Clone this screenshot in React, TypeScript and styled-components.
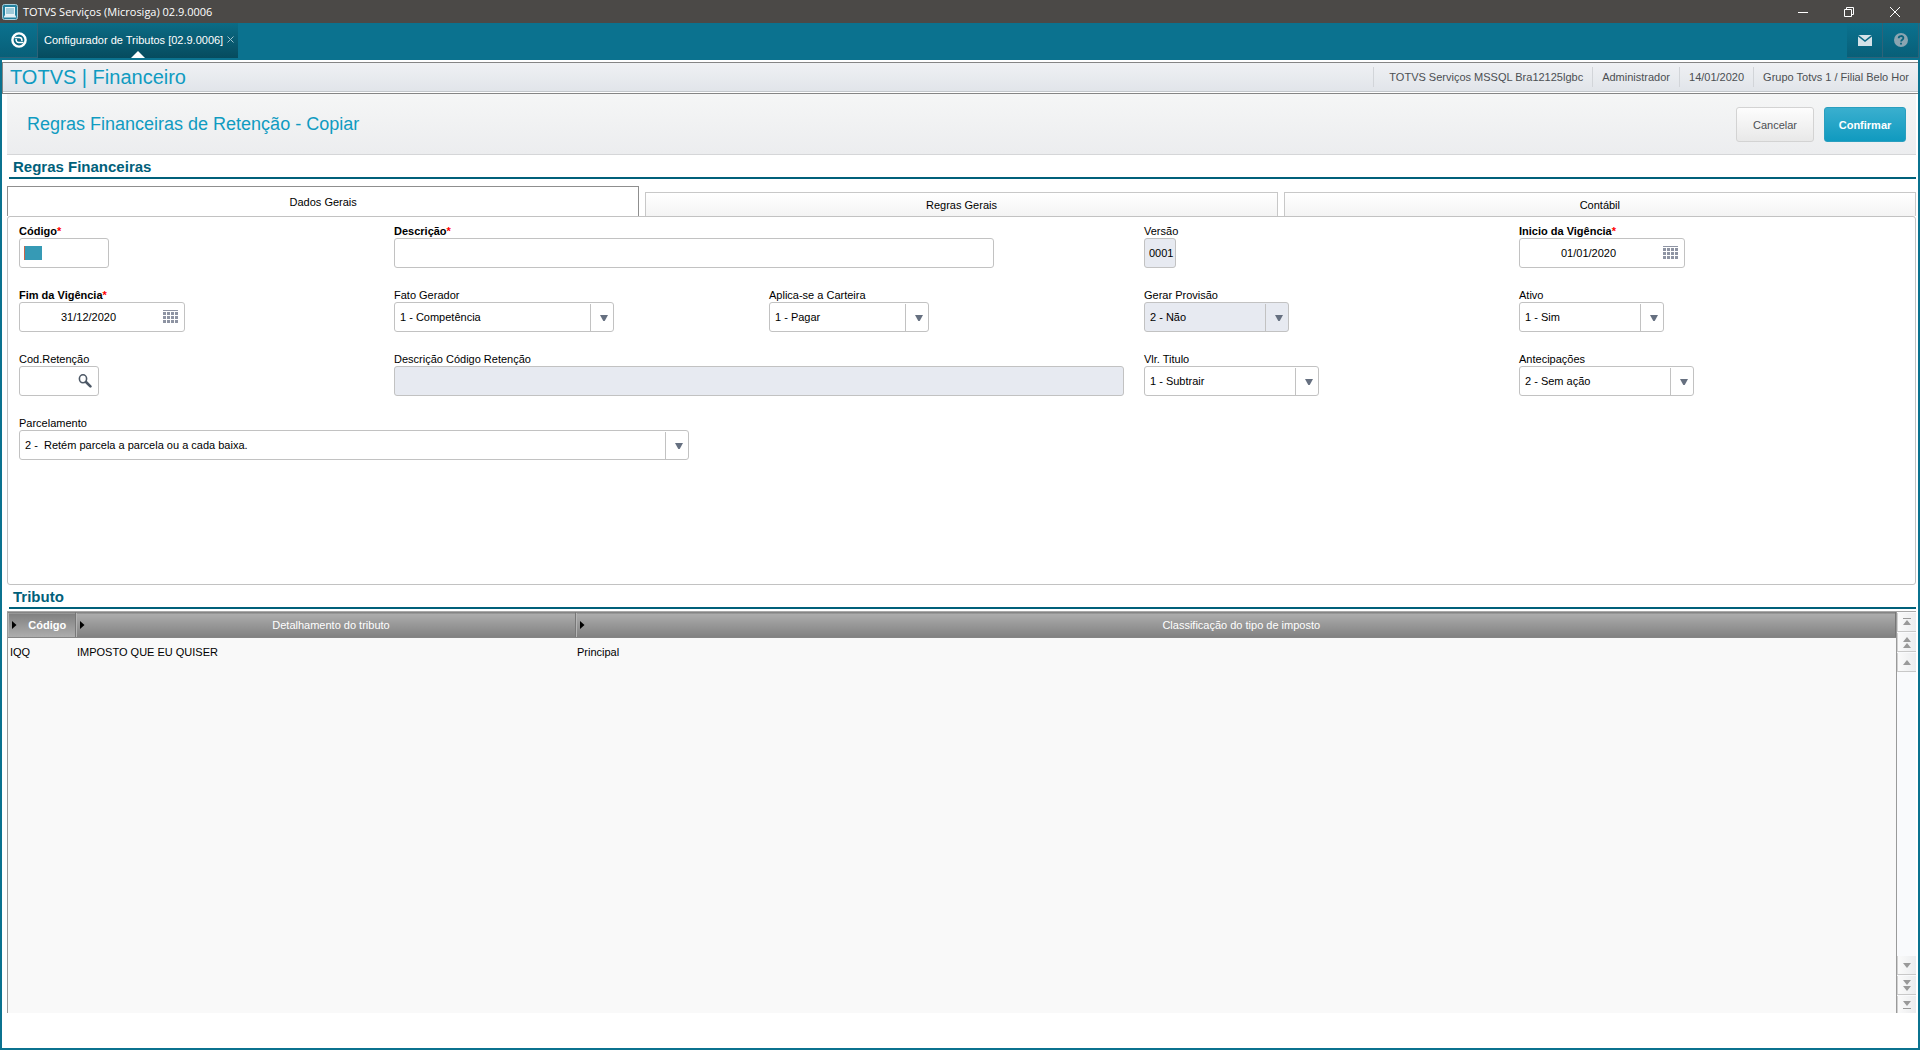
import React, { useState } from "react";
import styled, { createGlobalStyle, css } from "styled-components";

const GlobalStyle = createGlobalStyle`
  * { box-sizing: border-box; }
  body { margin: 0; background: #ffffff; }
  body, button, input, select, table {
    font-family: "Liberation Sans", Arial, sans-serif;
    font-size: 11px;
    color: #000000;
  }
  h1, h2, p { margin: 0; }
`;

const Window = styled.div`
  min-height: 100vh;
  display: flex;
  flex-direction: column;
`;

const TitleBar = styled.header`
  height: 23px;
  display: flex;
  align-items: center;
  justify-content: space-between;
  padding: 0 2px;
  background: #4b4947;
`;

const AppName = styled.div`
  display: flex;
  align-items: center;
  gap: 5px;
  font: 11px/16px "Open Sans", sans-serif;
  color: #ffffff;
`;

const WindowButtons = styled.div`
  display: flex;
`;

const WindowButton = styled.button`
  width: 46px;
  height: 21px;
  padding: 0;
  border: 0;
  display: grid;
  place-items: center;
  background: none;
`;

const TabBar = styled.nav`
  height: 37px;
  display: flex;
  align-items: flex-start;
  padding: 0 1px 0 0;
  background: #0b728f;
`;

const BarButton = styled.button<{ $width: number }>`
  width: ${(p) => p.$width}px;
  height: 35px;
  padding: 0;
  border: 0;
  border-right: 1px solid #2d6379;
  border-bottom: 1px solid #2d6379;
  display: grid;
  place-items: center;
  background: linear-gradient(#0b728f, #085f78);
`;

const ProgramTab = styled.div`
  position: relative;
  height: 35px;
  margin-right: auto;
  padding: 0 4px 2px 6px;
  display: flex;
  align-items: center;
  gap: 4px;
  background: linear-gradient(#0b6c86, #064b5e);
  color: #ffffff;
`;

const ActiveMark = styled.svg`
  position: absolute;
  bottom: 0;
  left: 50%;
  margin-left: -7px;
`;

const CloseTab = styled.button`
  padding: 0;
  border: 0;
  display: grid;
  background: none;
`;

const Frame = styled.div`
  flex: 1;
  display: flex;
  flex-direction: column;
  border: 2px solid #0b728f;
  border-top: 0;
  background: #ffffff;
`;

const ModuleBar = styled.div`
  height: 32px;
  margin-top: 2px;
  padding: 0 9px 2px 7px;
  display: flex;
  align-items: center;
  justify-content: space-between;
  border: 1px solid #858585;
  border-right: 0;
  box-shadow: inset 0 -1px #ffffff, inset 0 -2px #c3c7cb;
  background: linear-gradient(#eff1f4, #e0e4e9);
`;

const ModuleName = styled.h1`
  font-size: 20px;
  line-height: 24px;
  font-weight: normal;
  color: #0f9bc1;
`;

const SessionInfo = styled.ul`
  margin: 0;
  padding: 0;
  list-style: none;
  display: flex;
  color: #4c4f53;
`;

const SessionItem = styled.li`
  padding: 0 9px;
  line-height: 20px;
  border-left: 1px solid #d2d5d9;
  &:first-child { padding-left: 15px; }
  &:last-child { padding-right: 0; }
`;

const Content = styled.main`
  flex: 1;
  display: flex;
  flex-direction: column;
  padding: 0 2px 35px 5px;
`;

const ActionBar = styled.div`
  height: 61px;
  padding: 0 10px 0 20px;
  display: flex;
  align-items: center;
  border-bottom: 1px solid #d5d6d8;
  background: linear-gradient(#f5f6f6, #ecedef);
`;

const PageTitle = styled.h2`
  flex: 1;
  font-size: 18px;
  line-height: 24px;
  font-weight: normal;
  color: #0f9bc1;
`;

const ActionButton = styled.button<{ $primary?: boolean }>`
  width: ${(p) => (p.$primary ? 82 : 78)}px;
  height: 35px;
  margin-left: 10px;
  padding: 2px 0 0;
  border: 1px solid #d3d3d3;
  border-radius: 3px;
  background: linear-gradient(#fdfdfd, #e8e8e8);
  color: #4c4f53;
  ${(p) =>
    p.$primary &&
    css`
      border-color: #2a9fbf;
      background: linear-gradient(#3aafcf, #109abf);
      color: #ffffff;
      font-weight: bold;
    `}
`;

const SectionTitle = styled.h2`
  margin-left: 2px;
  padding: 2px 4px 0;
  border-bottom: 2px solid #00607a;
  font-size: 15px;
  line-height: 20px;
  color: #00607a;
`;

const Tabs = styled.div`
  display: flex;
  align-items: flex-end;
  gap: 6px;
  height: 37px;
  padding-top: 7px;
`;

const Tab = styled.button<{ $active: boolean }>`
  flex: 1;
  height: ${(p) => (p.$active ? 30 : 24)}px;
  padding: 0;
  border: 1px solid ${(p) => (p.$active ? "#8f8f8f" : "#c8c8c8")};
  border-bottom: 0;
  background: ${(p) => (p.$active ? "#ffffff" : "linear-gradient(#ffffff, #f4f4f4)")};
`;

const Panel = styled.form`
  min-height: 369px;
  padding: 8px 21px 0 11px;
  display: grid;
  grid-template-columns: repeat(5, 1fr);
  grid-auto-rows: 64px;
  align-content: start;
  border: 1px solid #c2c2c2;
  border-radius: 3px;
`;

const FieldCell = styled.div<{ $col: number; $row: number }>`
  grid-column: ${(p) => p.$col} / span 1;
  grid-row: ${(p) => p.$row};
  min-width: 0;
`;

const FieldLabel = styled.label<{ $required?: boolean }>`
  display: block;
  line-height: 13px;
  white-space: nowrap;
  font-weight: ${(p) => (p.$required ? "bold" : "normal")};
`;

const Asterisk = styled.span`
  color: #ff0000;
`;

const ControlBox = styled.div<{ $width: number; $locked?: boolean }>`
  position: relative;
  width: ${(p) => p.$width}px;
  height: 30px;
  display: flex;
  align-items: center;
  border: 1px solid #c2c2c2;
  border-radius: 3px;
  background: ${(p) => (p.$locked ? "#e7eaf1" : "#ffffff")};
`;

const TextInput = styled.input<{ $center?: boolean }>`
  flex: 1;
  min-width: 0;
  height: 28px;
  padding: 0 0 0 ${(p) => (p.$center ? 0 : 4)}px;
  border: 0;
  outline: 0;
  background: none;
  text-align: ${(p) => (p.$center ? "center" : "left")};
`;

const SelectInput = styled.select`
  flex: 1;
  height: 28px;
  padding: 0 24px 0 5px;
  border: 0;
  outline: 0;
  appearance: none;
  background: none;
  white-space: pre;
`;

const DropMark = styled.span`
  position: absolute;
  top: 1px;
  right: 0;
  bottom: 0;
  width: 23px;
  display: grid;
  place-items: center;
  padding-left: 3px;
  border-left: 1px solid #c2c2c2;
  pointer-events: none;
`;

const Selection = styled.span`
  position: absolute;
  top: 7px;
  left: 4px;
  width: 18px;
  height: 14px;
  border-left: 1px solid #c9654a;
  background: #369ab5;
`;

const FieldButton = styled.button`
  padding: 0 6px;
  border: 0;
  display: grid;
  background: none;
`;

const GridArea = styled.div`
  flex: 1;
  display: flex;
  margin-top: 2px;
  border-top: 1px solid #a8a8a8;
`;

const GridBody = styled.div`
  flex: 1;
  border: 1px solid #9a9a9a;
  border-top: 0;
  border-bottom: 0;
  background: #f9f9f9;
`;

const Table = styled.table`
  width: 100%;
  table-layout: fixed;
  border-collapse: collapse;
`;

const HeaderCell = styled.th<{ $sorted?: boolean }>`
  height: 25px;
  padding: 0;
  border-top: 1px solid #848484;
  border-right: 1px solid #777777;
  border-bottom: 1px solid #848484;
  box-shadow: inset 1px 0 #b5b5b5;
  background: ${(p) => (p.$sorted ? "linear-gradient(#808080, #adadad)" : "linear-gradient(#adadad, #808080)")};
  color: #ffffff;
  font-weight: ${(p) => (p.$sorted ? "bold" : "normal")};
`;

const HeaderContent = styled.div`
  display: flex;
  align-items: center;
  padding-left: 4px;
`;

const HeaderText = styled.span`
  flex: 1;
  padding-left: 3px;
  text-align: center;
`;

const Cell = styled.td`
  height: 29px;
  padding: 0 2px;
`;

const ScrollRail = styled.div`
  width: 19px;
  display: flex;
  flex-direction: column;
  justify-content: space-between;
  padding-top: 1px;
  background: #f9fafc;
`;

const ScrollGroup = styled.div`
  display: flex;
  flex-direction: column;
  gap: 1px;
`;

const ScrollButton = styled.button<{ $short?: boolean }>`
  height: ${(p) => (p.$short ? 17 : 19)}px;
  padding: 0;
  border: 0;
  border-left: 1px solid #d0d0d0;
  border-bottom: ${(p) => (p.$short ? 0 : 1)}px solid #c8c8c8;
  display: grid;
  place-items: center;
  background: linear-gradient(90deg, #fafafa, #ebecee);
`;

const DownArrow = () => (
  <svg width="8" height="6" viewBox="0 0 8 6" aria-hidden="true">
    <path d="M0 0h8L4.7 6H3.3z" fill="#667080" />
  </svg>
);

const CalendarIcon = () => (
  <svg width="15" height="14" viewBox="0 0 15 14" fill="#8e94a3" aria-hidden="true">
    <path d="M0 0h15v1H0z" />
    {[2, 6, 10].map((y) =>
      [0, 4, 8, 12].map((x) => <rect key={`${x}-${y}`} x={x} y={y} width="3" height="3" />)
    )}
  </svg>
);

const SearchIcon = () => (
  <svg width="14" height="14" viewBox="0 0 14 14" fill="none" stroke="#4d5866" aria-hidden="true">
    <ellipse cx="5" cy="4.8" rx="3.6" ry="4" strokeWidth="1.6" />
    <path d="M8 8l4.4 4.400" strokeWidth="2.6" strokeLinecap="round" />
  </svg>
);

const SortMark = () => (
  <svg width="5" height="8" viewBox="0 0 5 8" aria-hidden="true">
    <path d="M0 0l4.500 4L0 8z" fill="#000000" />
  </svg>
);

type ScrollKind = "top" | "pageUp" | "up" | "down" | "pageDown" | "bottom";

const scrollPaths: Record<ScrollKind, string> = {
  top: "M0 1h8v1H0zM4 3l4 5H0z",
  pageUp: "M4 0l4 5H0zM4 6l4 5H0z",
  up: "M4 3l4 5H0z",
  down: "M0 3h8L4 8z",
  pageDown: "M0 0h8L4 5zM0 6h8l-4 5z",
  bottom: "M0 2h8L4 7zM0 9h8v1H0z",
};

const ScrollIcon = ({ kind }: { kind: ScrollKind }) => (
  <svg width="8" height="11" viewBox="0 0 8 11" aria-hidden="true">
    <path d={scrollPaths[kind]} fill="#999999" />
  </svg>
);

interface FieldProps {
  id: string;
  label: string;
  col: number;
  row: number;
  width: number;
  kind: "text" | "date" | "search" | "select";
  value?: string;
  required?: boolean;
  locked?: boolean;
  selected?: boolean;
}

const fields: FieldProps[] = [
  { id: "codigo", label: "Código", col: 1, row: 1, width: 90, kind: "text", required: true, selected: true },
  { id: "descricao", label: "Descrição", col: 2, row: 1, width: 600, kind: "text", required: true },
  { id: "versao", label: "Versão", col: 4, row: 1, width: 32, kind: "text", value: "0001", locked: true },
  { id: "inicio", label: "Inicio da Vigência", col: 5, row: 1, width: 166, kind: "date", value: "01/01/2020", required: true },
  { id: "fim", label: "Fim da Vigência", col: 1, row: 2, width: 166, kind: "date", value: "31/12/2020", required: true },
  { id: "fato", label: "Fato Gerador", col: 2, row: 2, width: 220, kind: "select", value: "1 - Competência" },
  { id: "carteira", label: "Aplica-se a Carteira", col: 3, row: 2, width: 160, kind: "select", value: "1 - Pagar" },
  { id: "provisao", label: "Gerar Provisão", col: 4, row: 2, width: 145, kind: "select", value: "2 - Não", locked: true },
  { id: "ativo", label: "Ativo", col: 5, row: 2, width: 145, kind: "select", value: "1 - Sim" },
  { id: "retencao", label: "Cod.Retenção", col: 1, row: 3, width: 80, kind: "search" },
  { id: "descRetencao", label: "Descrição Código Retenção", col: 2, row: 3, width: 730, kind: "text", locked: true },
  { id: "titulo", label: "Vlr. Titulo", col: 4, row: 3, width: 175, kind: "select", value: "1 - Subtrair" },
  { id: "antecipacoes", label: "Antecipações", col: 5, row: 3, width: 175, kind: "select", value: "2 - Sem ação" },
  { id: "parcelamento", label: "Parcelamento", col: 1, row: 4, width: 670, kind: "select", value: "2 -\u00a0 Retém parcela a parcela ou a cada baixa." },
];

const Field = ({ id, label, col, row, width, kind, value = "", required, locked, selected }: FieldProps) => (
  <FieldCell $col={col} $row={row}>
    <FieldLabel htmlFor={id} $required={required}>
      {label}
      {required && <Asterisk>*</Asterisk>}
    </FieldLabel>
    <ControlBox $width={width} $locked={locked}>
      {kind === "select" ? (
        <>
          <SelectInput id={id} defaultValue={value}>
            <option>{value}</option>
          </SelectInput>
          <DropMark>
            <DownArrow />
          </DropMark>
        </>
      ) : (
        <TextInput id={id} defaultValue={value} readOnly={locked} $center={kind === "date"} />
      )}
      {selected && <Selection />}
      {kind === "date" && (
        <FieldButton type="button" aria-label="Abrir calendário">
          <CalendarIcon />
        </FieldButton>
      )}
      {kind === "search" && (
        <FieldButton type="button" aria-label="Pesquisar">
          <SearchIcon />
        </FieldButton>
      )}
    </ControlBox>
  </FieldCell>
);

const tabNames = ["Dados Gerais", "Regras Gerais", "Contábil"];

export default function App() {
  const [tab, setTab] = useState(0);
  return (
    <Window>
      <GlobalStyle />
      <TitleBar>
        <AppName>
          <svg width="16" height="16" viewBox="0 0 16 16" aria-hidden="true">
            <rect x="0.5" y="0.5" width="15" height="15" rx="2" fill="#23809e" stroke="#a9cfdb" />
            <rect x="3.500" y="3.500" width="9" height="7" fill="#9fcbd9" stroke="#e8f4f8" />
            <path d="M3 11h10l1.500 2.500h-13z" fill="#e4f1f5" />
          </svg>
          TOTVS Serviços (Microsiga) 02.9.0006
        </AppName>
        <WindowButtons>
          <WindowButton aria-label="Minimizar">
            <svg width="10" height="10" viewBox="0 0 10 10"><path d="M0 5h10v1H0z" fill="#ffffff" /></svg>
          </WindowButton>
          <WindowButton aria-label="Restaurar">
            <svg width="10" height="10" viewBox="0 0 10 10" fill="none" stroke="#ffffff">
              <path d="M0.5 2.5h7v7h-7zM2.5 2.5v-2h7v7h-2" />
            </svg>
          </WindowButton>
          <WindowButton aria-label="Fechar">
            <svg width="10" height="10" viewBox="0 0 10 10" fill="none" stroke="#ffffff">
              <path d="M0 0l10 10M10 0L0 10" />
            </svg>
          </WindowButton>
        </WindowButtons>
      </TitleBar>
      <TabBar>
        <BarButton $width={38} aria-label="Início">
          <svg width="16" height="16" viewBox="0 0 16 16" fill="none" stroke="#ffffff">
            <circle cx="8" cy="8" r="6.6" strokeWidth="2.4" />
            <path d="M3.500 5.600h4.800c1.600 0 2.600 1 2.600 2.600v0.800M12.500 10.400H7.700c-1.600 0-2.600-1-2.600-2.600V7" strokeWidth="1.500" />
          </svg>
        </BarButton>
        <ProgramTab>
          Configurador de Tributos [02.9.0006]
          <CloseTab aria-label="Fechar aba">
            <svg width="7" height="7" viewBox="0 0 7 7" stroke="#9dc3cf">
              <path d="M0.500 0.500l6 6M6.500 0.500l-6 6" />
            </svg>
          </CloseTab>
          <ActiveMark width="14" height="7" viewBox="0 0 14 7">
            <path d="M0 7l7-7 7 7z" fill="#ffffff" />
          </ActiveMark>
        </ProgramTab>
        <BarButton $width={36} aria-label="Mensagens">
          <svg width="14" height="11" viewBox="0 0 14 11">
            <rect width="14" height="11" fill="#d5e2e8" />
            <path d="M0 0.500l7 5.500 7-5.500" fill="none" stroke="#0a6984" strokeWidth="1.500" />
          </svg>
        </BarButton>
        <BarButton $width={36} aria-label="Ajuda">
          <svg width="14" height="14" viewBox="0 0 14 14">
            <circle cx="7" cy="7" r="7" fill="#8ba5b1" />
            <path d="M4.700 5.300c0-3 4.700-3 4.700-0.200 0 1.700-2.300 1.700-2.300 3.400M7 9.700v1.800" fill="none" stroke="#08637d" strokeWidth="1.800" />
          </svg>
        </BarButton>
      </TabBar>
      <Frame>
        <ModuleBar>
          <ModuleName>TOTVS | Financeiro</ModuleName>
          <SessionInfo>
            <SessionItem>TOTVS Serviços MSSQL Bra12125lgbc</SessionItem>
            <SessionItem>Administrador</SessionItem>
            <SessionItem>14/01/2020</SessionItem>
            <SessionItem>Grupo Totvs 1 / Filial Belo Hor</SessionItem>
          </SessionInfo>
        </ModuleBar>
        <Content>
          <ActionBar>
            <PageTitle>Regras Financeiras de Retenção - Copiar</PageTitle>
            <ActionButton>Cancelar</ActionButton>
            <ActionButton $primary>Confirmar</ActionButton>
          </ActionBar>
          <SectionTitle>Regras Financeiras</SectionTitle>
          <Tabs role="tablist">
            {tabNames.map((name, i) => (
              <Tab key={name} role="tab" aria-selected={tab === i} $active={tab === i} onClick={() => setTab(i)}>
                {name}
              </Tab>
            ))}
          </Tabs>
          <Panel>
            {fields.map((f) => (
              <Field key={f.id} {...f} />
            ))}
          </Panel>
          <SectionTitle>Tributo</SectionTitle>
          <GridArea>
            <GridBody>
              <Table>
                <colgroup>
                  <col width="67" />
                  <col width="500" />
                  <col />
                </colgroup>
                <thead>
                  <tr>
                    {["Código", "Detalhamento do tributo", "Classificação do tipo de imposto"].map((name, i) => (
                      <HeaderCell key={name} $sorted={i === 0}>
                        <HeaderContent>
                          <SortMark />
                          <HeaderText>{name}</HeaderText>
                        </HeaderContent>
                      </HeaderCell>
                    ))}
                  </tr>
                </thead>
                <tbody>
                  <tr>
                    <Cell>IQQ</Cell>
                    <Cell>IMPOSTO QUE EU QUISER</Cell>
                    <Cell>Principal</Cell>
                  </tr>
                </tbody>
              </Table>
            </GridBody>
            <ScrollRail>
              <ScrollGroup>
                <ScrollButton aria-label="Primeiro registro"><ScrollIcon kind="top" /></ScrollButton>
                <ScrollButton aria-label="Página anterior"><ScrollIcon kind="pageUp" /></ScrollButton>
                <ScrollButton aria-label="Registro anterior"><ScrollIcon kind="up" /></ScrollButton>
              </ScrollGroup>
              <ScrollGroup>
                <ScrollButton aria-label="Próximo registro"><ScrollIcon kind="down" /></ScrollButton>
                <ScrollButton aria-label="Próxima página"><ScrollIcon kind="pageDown" /></ScrollButton>
                <ScrollButton $short aria-label="Último registro"><ScrollIcon kind="bottom" /></ScrollButton>
              </ScrollGroup>
            </ScrollRail>
          </GridArea>
        </Content>
      </Frame>
    </Window>
  );
}
